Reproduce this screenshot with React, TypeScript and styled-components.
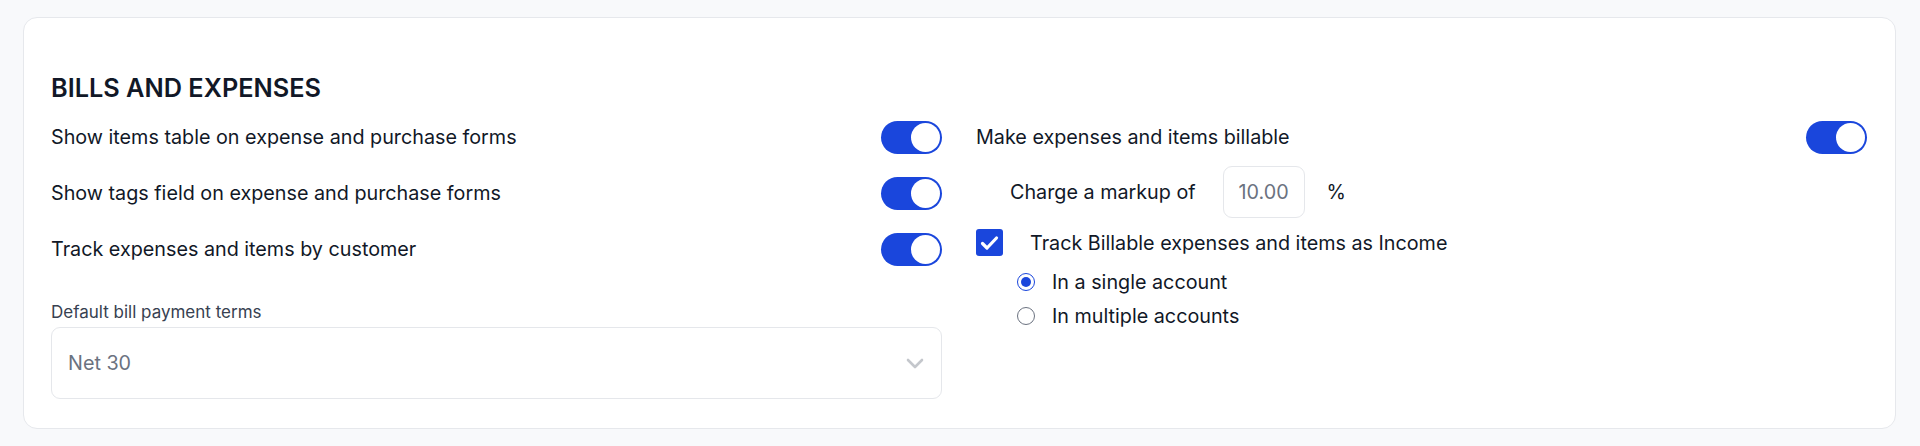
import React from "react";
import styled, { createGlobalStyle } from "styled-components";

const Global = createGlobalStyle`
  html, body { margin: 0; padding: 0; background: #f8f9fb; }
  body { font-family: Inter, "Noto Sans", sans-serif; -webkit-font-smoothing: antialiased; }
  * { box-sizing: border-box; }
`;

const Page = styled.div`
  padding: 17px 24px 17px 23px;
`;

const Card = styled.section`
  background: #ffffff;
  border: 1px solid #e6e8ec;
  border-radius: 14px;
  padding: 54px 28px 29px 27px;
`;

const Heading = styled.h2`
  margin: 0 0 17px;
  font-size: 25.3px;
  line-height: 32px;
  font-weight: 600;
  color: #111827;
`;

const Columns = styled.div`
  display: grid;
  grid-template-columns: 1fr 1fr;
  column-gap: 34px;
  align-items: start;
`;

const Column = styled.div`
  display: flex;
  flex-direction: column;
`;

const ToggleList = styled.div`
  display: flex;
  flex-direction: column;
  gap: 24px;
`;

const ToggleRow = styled.div`
  display: flex;
  align-items: center;
  justify-content: space-between;
  height: 32px;
`;

const Text = styled.span`
  font-size: 19.75px;
  line-height: 26px;
  color: #111827;
`;

const Track = styled.span<{ $on: boolean }>`
  width: 61px;
  height: 33px;
  border-radius: 17px;
  background: ${(p) => (p.$on ? "#1a46dc" : "#d1d5db")};
  display: flex;
  align-items: center;
  justify-content: ${(p) => (p.$on ? "flex-end" : "flex-start")};
  padding: 2px;
  flex-shrink: 0;
`;

const Knob = styled.span`
  width: 29px;
  height: 29px;
  border-radius: 50%;
  background: #ffffff;
`;

const Field = styled.div`
  margin-top: 37px;
  display: flex;
  flex-direction: column;
  gap: 5px;
`;

const Label = styled.label`
  font-size: 17px;
  line-height: 20px;
  color: #374151;
`;

const SelectBox = styled.div`
  height: 72px;
  border: 1px solid #e5e7eb;
  border-radius: 9px;
  display: flex;
  align-items: center;
  justify-content: space-between;
  padding: 0 17px 0 16px;
  background: #fff;
`;

const SelectValue = styled.span`
  font-size: 19.75px;
  color: #6b7280;
`;

const SubRow = styled.div<{ $indent: number; $gap: number; $mt: number }>`
  display: flex;
  align-items: center;
  padding-left: ${(p) => p.$indent}px;
  gap: ${(p) => p.$gap}px;
  margin-top: ${(p) => p.$mt}px;
`;

const NumberInput = styled.div`
  width: 82px;
  height: 52px;
  border: 1px solid #e5e7eb;
  border-radius: 9px;
  display: flex;
  align-items: center;
  justify-content: center;
  font-size: 19.75px;
  color: #6b7280;
  margin-left: 27px;
  margin-right: 22px;
`;

const Checkbox = styled.span`
  width: 27px;
  height: 27px;
  border-radius: 3px;
  background: #1a46dc;
  display: flex;
  align-items: center;
  justify-content: center;
  flex-shrink: 0;
`;

const RadioList = styled.div`
  display: flex;
  flex-direction: column;
  gap: 6px;
  margin-top: 12px;
  padding-left: 41px;
`;

const RadioRow = styled.div`
  display: flex;
  align-items: center;
  gap: 17px;
  height: 28px;
`;

const Radio = styled.span<{ $checked: boolean }>`
  width: 18px;
  height: 18px;
  border-radius: 50%;
  border: 1.5px solid ${(p) => (p.$checked ? "#1a46dc" : "#6b7280")};
  display: flex;
  align-items: center;
  justify-content: center;
  flex-shrink: 0;
  &::after {
    content: "";
    width: 10px;
    height: 10px;
    border-radius: 50%;
    background: ${(p) => (p.$checked ? "#1a46dc" : "transparent")};
  }
`;

const Toggle = ({ on = true }: { on?: boolean }) => (
  <Track $on={on}>
    <Knob />
  </Track>
);

const Chevron = () => (
  <svg width="18" height="11" viewBox="0 0 18 11" fill="none">
    <path d="M2 2l7 7 7-7" stroke="#c4c7cc" strokeWidth="2.6" strokeLinecap="round" strokeLinejoin="round" />
  </svg>
);

const Check = () => (
  <svg width="19" height="16" viewBox="0 0 19 16" fill="none">
    <path d="M2.5 8.5l4.5 4.5 9.5-10" stroke="#fff" strokeWidth="3.2" strokeLinecap="round" strokeLinejoin="round" />
  </svg>
);

export default function App() {
  return (
    <>
      <Global />
      <Page>
        <Card>
          <Heading>BILLS AND EXPENSES</Heading>
          <Columns>
            <Column>
              <ToggleList>
                <ToggleRow>
                  <Text>Show items table on expense and purchase forms</Text>
                  <Toggle />
                </ToggleRow>
                <ToggleRow>
                  <Text>Show tags field on expense and purchase forms</Text>
                  <Toggle />
                </ToggleRow>
                <ToggleRow>
                  <Text>Track expenses and items by customer</Text>
                  <Toggle />
                </ToggleRow>
              </ToggleList>
              <Field>
                <Label>Default bill payment terms</Label>
                <SelectBox>
                  <SelectValue>Net 30</SelectValue>
                  <Chevron />
                </SelectBox>
              </Field>
            </Column>
            <Column>
              <ToggleRow>
                <Text>Make expenses and items billable</Text>
                <Toggle />
              </ToggleRow>
              <SubRow $indent={34} $gap={0} $mt={13}>
                <Text>Charge a markup of</Text>
                <NumberInput>10.00</NumberInput>
                <Text>%</Text>
              </SubRow>
              <SubRow $indent={0} $gap={27} $mt={11}>
                <Checkbox>
                  <Check />
                </Checkbox>
                <Text>Track Billable expenses and items as Income</Text>
              </SubRow>
              <RadioList>
                <RadioRow>
                  <Radio $checked />
                  <Text>In a single account</Text>
                </RadioRow>
                <RadioRow>
                  <Radio $checked={false} />
                  <Text>In multiple accounts</Text>
                </RadioRow>
              </RadioList>
            </Column>
          </Columns>
        </Card>
      </Page>
    </>
  );
}
